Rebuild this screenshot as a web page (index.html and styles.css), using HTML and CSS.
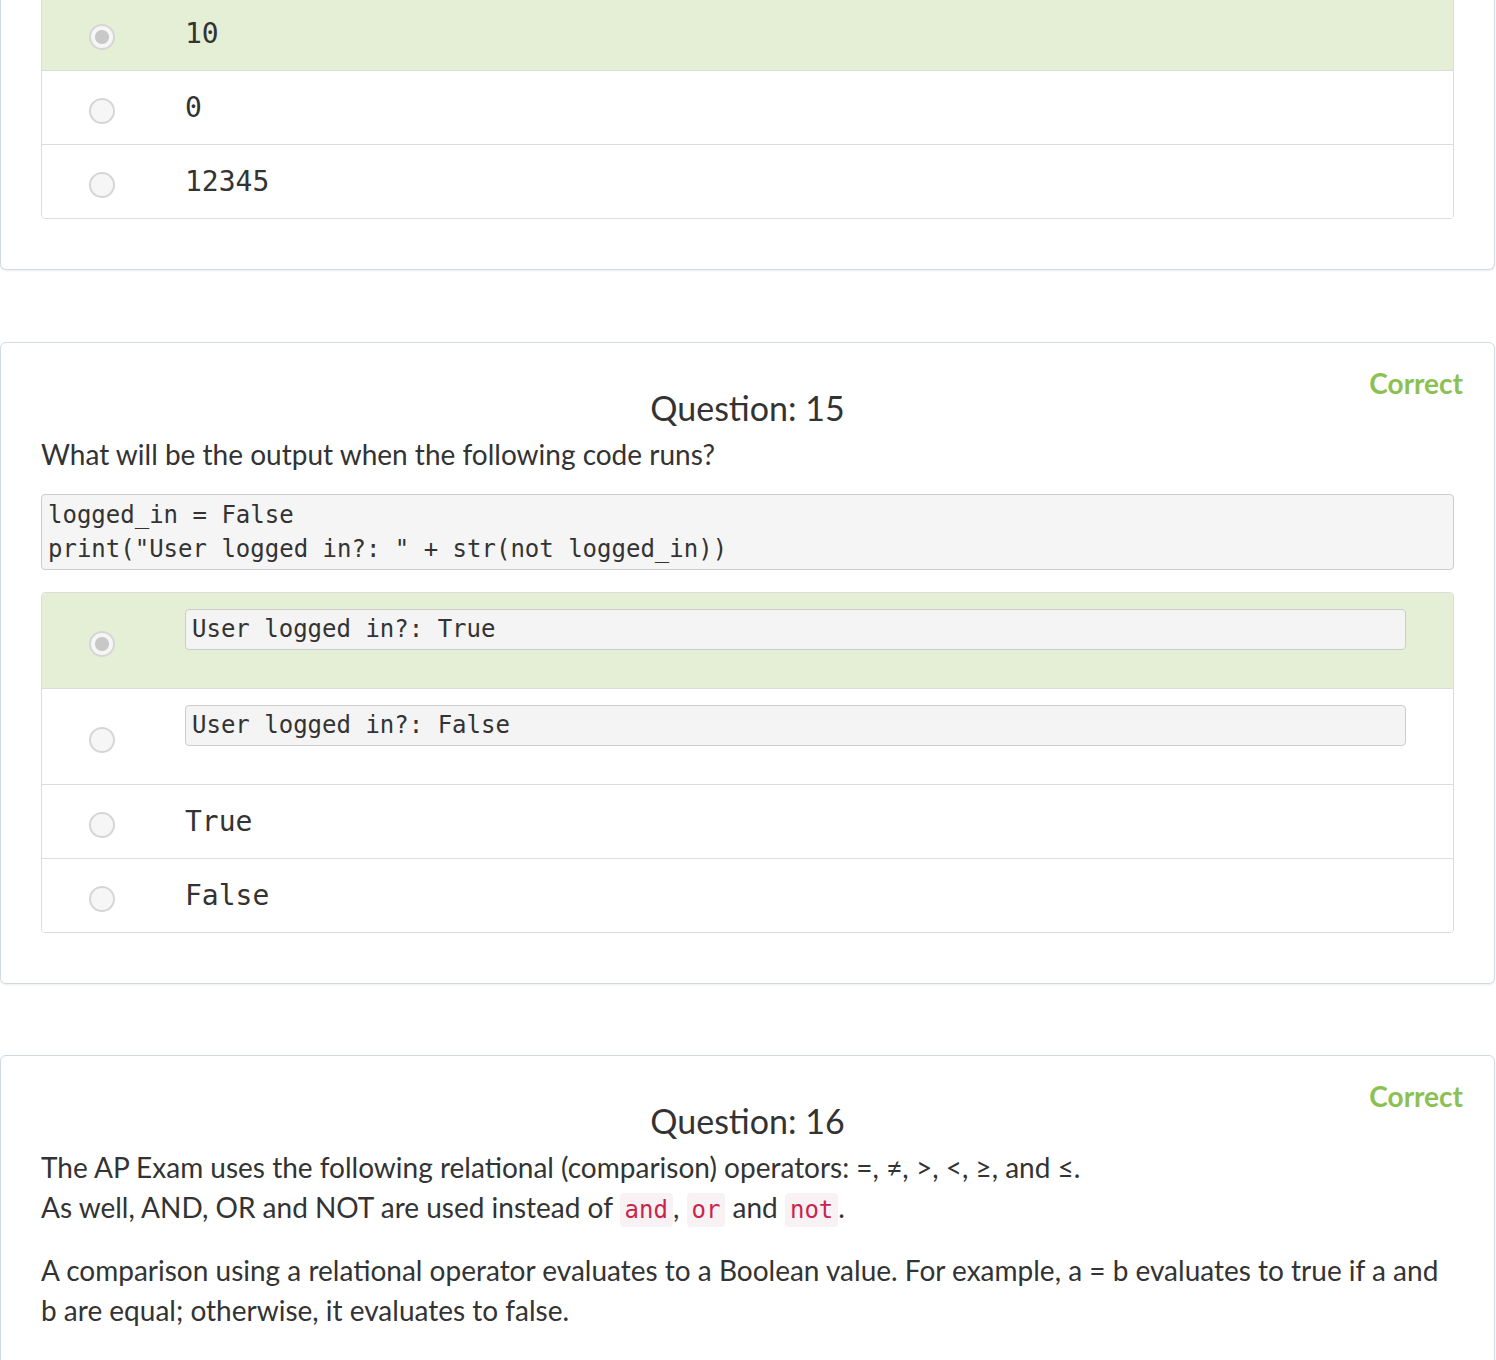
FILE: index.html
```html
<!DOCTYPE html>
<html lang="en">
<head>
<meta charset="utf-8">
<title>Quiz results</title>
<link rel="stylesheet" href="styles.css">
</head>
<body>
<div class="card card-cut">
  <ul class="answers">
    <li class="answer selected"><span class="radio checked"></span><span class="answer-text">10</span></li>
    <li class="answer"><span class="radio"></span><span class="answer-text">0</span></li>
    <li class="answer"><span class="radio"></span><span class="answer-text">12345</span></li>
  </ul>
</div>

<div class="card">
  <span class="status">Correct</span>
  <h2 class="q-title">Question: 15</h2>
  <p class="q-text">What will be the output when the following code runs?</p>
  <pre class="code">logged_in = False
print("User logged in?: " + str(not logged_in))</pre>
  <ul class="answers">
    <li class="answer selected"><span class="radio checked"></span><pre class="code-answer">User logged in?: True</pre></li>
    <li class="answer"><span class="radio"></span><pre class="code-answer">User logged in?: False</pre></li>
    <li class="answer"><span class="radio"></span><span class="answer-text">True</span></li>
    <li class="answer"><span class="radio"></span><span class="answer-text">False</span></li>
  </ul>
</div>

<div class="card card-text">
  <span class="status">Correct</span>
  <h2 class="q-title">Question: 16</h2>
  <p class="q-text">The AP Exam uses the following relational (comparison) operators: =, ≠, &gt;, &lt;, ≥, and ≤.<br>As well, AND, OR and NOT are used instead of <code>and</code>, <code>or</code> and <code>not</code>.</p>
  <p class="q-text">A comparison using a relational operator evaluates to a Boolean value. For example, a = b evaluates to true if a and b are equal; otherwise, it evaluates to false.</p>
</div>
</body>
</html>
```

FILE: styles.css
```css
html, body {
  margin: 0;
  padding: 0;
  background: #ffffff;
}

body {
  font-family: Lato, "Open Sans", "Liberation Sans", sans-serif;
  color: #333333;
  font-size: 28px;
  line-height: 40px;
}

.card {
  position: relative;
  width: 1413px;
  margin: 0 1px 71px 0;
  padding: 0 40px 0 40px;
  border: 1px solid #d2dae1;
  border-radius: 6px;
  box-shadow: 0 1px 2px rgba(0, 0, 0, 0.08);
  background: #ffffff;
}

.card-cut {
  margin-top: -4px;
  border-top: 0;
  border-top-left-radius: 0;
  border-top-right-radius: 0;
  margin-bottom: 72px;
}

.card-text {
  padding-bottom: 60px;
}

.status {
  position: absolute;
  top: 24px;
  right: 31px;
  font-weight: 700;
  font-size: 28px;
  line-height: 32px;
  color: #8cc152;
}

.q-title {
  margin: 45px 0 6px;
  font-size: 34px;
  line-height: 40px;
  font-weight: 400;
  text-align: center;
  color: #333333;
}

.q-text {
  margin: 0 0 20px;
}

.code {
  margin: 0 0 22px;
  padding: 3px 6px;
  font-family: "DejaVu Sans Mono", "Liberation Mono", monospace;
  font-size: 24px;
  line-height: 34px;
  color: #333333;
  background: #f5f5f5;
  border: 1px solid #cccccc;
  border-radius: 4px;
}

code {
  font-family: "DejaVu Sans Mono", "Liberation Mono", monospace;
  font-size: 24px;
  padding: 3px 5px;
  color: #c7254e;
  background: #f9f2f4;
  border-radius: 4px;
}

.answers {
  list-style: none;
  margin: 0 0 50px;
  padding: 0;
  border: 1px solid #dcdcdc;
  border-radius: 4px;
  overflow: hidden;
}

.answer {
  display: flex;
  align-items: center;
  gap: 70px;
  padding: 16px 47px 16px 47px;
  min-height: 41px;
  background: #ffffff;
}

.answer + .answer {
  border-top: 1px solid #dcdcdc;
}

.answer.selected {
  background: #e4efd6;
}

.answer-text {
  font-family: "DejaVu Sans Mono", "Liberation Mono", monospace;
  font-size: 28px;
  line-height: 41px;
  color: #333333;
}

.radio {
  flex: none;
  box-sizing: border-box;
  width: 26px;
  height: 26px;
  margin-top: 6px;
  border: 2px solid #d6d6d6;
  border-radius: 50%;
  background: #f6f6f6;
}

.radio.checked {
  background: radial-gradient(circle, #c8c8c8 0, #c8c8c8 6.5px, #f6f6f6 7.5px);
}

.code-answer {
  flex: 1;
  margin: 0 0 22px;
  padding: 5px 6px;
  font-family: "DejaVu Sans Mono", "Liberation Mono", monospace;
  font-size: 24px;
  line-height: 29px;
  color: #333333;
  background: #f4f4f4;
  border: 1px solid #cccccc;
  border-radius: 4px;
}
```
